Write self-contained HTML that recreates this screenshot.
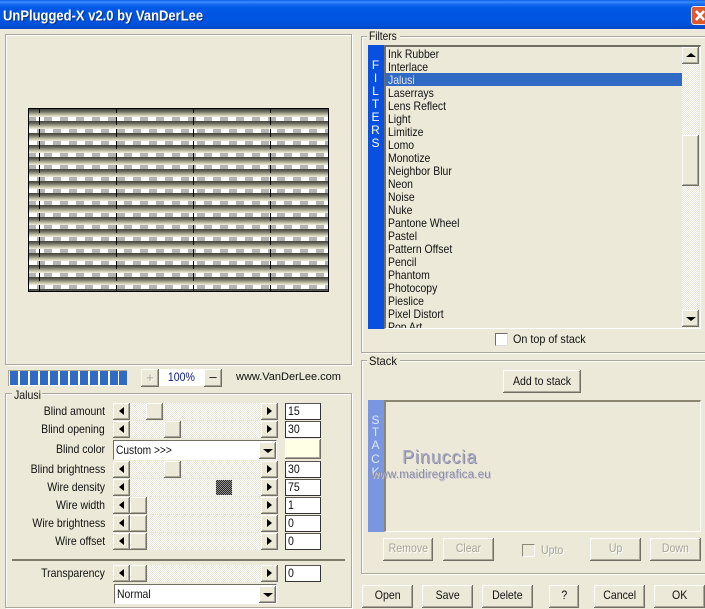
<!DOCTYPE html>
<html><head><meta charset="utf-8">
<style>
html,body{margin:0;padding:0;background:#ece9d8}
body{width:705px;height:609px;position:relative;overflow:hidden;font:12px/13px "Liberation Sans",sans-serif;color:#111}
div,span{position:absolute;box-sizing:border-box;white-space:nowrap}
i{font-style:normal;display:inline-block;transform:scaleX(.88)}
i.l{transform-origin:left center}
.title{left:0;top:0;width:705px;height:29px;background:linear-gradient(#0a5fe8 0,#3c8eff 2px,#1a6cf0 4px,#0058e4 8px,#0054e0 22px,#0049c8 29px)}
.g{border:1px solid #aca899;box-shadow:1px 1px 0 #fff,inset 1px 1px 0 #fff}
.lg{background:#ece9d8;padding:0 2px;height:13px}
.b{background:#ece9d8;box-shadow:inset -1px -1px 0 #716f64,inset 1px 1px 0 #fff,inset -2px -2px 0 #aca899;text-align:center}
.t{background:repeating-conic-gradient(#fff 0 25%,#e8e5d4 0 50%) 0 0/2px 2px}
.a{width:0;height:0}
.L{border:4px solid transparent;border-left:0;border-right:5px solid #000}
.R{border:4px solid transparent;border-right:0;border-left:5px solid #000}
.U{border:5px solid transparent;border-top:0;border-bottom:4px solid #000}
.D{border:5px solid transparent;border-bottom:0;border-top:4px solid #000}
.lab{right:600px;text-align:right;font-size:12px;transform:scaleX(.875);transform-origin:right center}
.inp{background:#fff;border:1px solid #333;border-top-color:#555;left:285px;width:36px;height:17px;padding:1px 0 0 2px;font-size:12px}
.it{left:388px;font-size:12px;line-height:13px;transform:scaleX(.87);transform-origin:left center}
.dis{color:#a5a294;text-shadow:1px 1px 0 #fff}
.v{color:#fff;width:15px;text-align:center;font-size:12px}
.bl{top:371px;width:8px;height:14px;background:#316ac5}
</style></head><body>

<div class="title"></div>
<div style="left:3px;top:7px;color:#fff;font:bold 13px/16px 'Liberation Sans',sans-serif;transform:scaleY(1.12);transform-origin:left top;text-shadow:1px 1px 0 #0a2f8a">UnPlugged-X v2.0 by VanDerLee</div>
<div style="left:691px;top:6px;width:20px;height:19px;background:#dd5a30;border:1px solid #f0e8e0;border-radius:3px"></div>
<svg style="position:absolute;left:691px;top:6px" width="14" height="19"><path d="M5 5L13 14M13 5L5 14" stroke="#fff" stroke-width="2.6" fill="none"/></svg>

<!-- preview -->
<div class="g" style="left:5px;top:34px;width:347px;height:331px"></div>
<svg style="position:absolute;left:28px;top:108px" width="301" height="184" shape-rendering="crispEdges">
<defs>
<pattern id="band" width="16" height="12" patternUnits="userSpaceOnUse" x="0" y="1">
<rect width="16" height="1" y="0" fill="#4a4a40"/><rect width="16" height="1" y="1" fill="#5a5a4e"/><rect width="16" height="1" y="2" fill="#6e6e60"/><rect width="16" height="1" y="3" fill="#868674"/><rect width="16" height="1" y="4" fill="#a0a08c"/><rect width="16" height="1" y="5" fill="#babaa2"/><rect width="16" height="1" y="6" fill="#d2d2b8"/><rect width="16" height="1" y="7" fill="#e6e6cf"/>
<rect width="16" height="4" y="8" fill="#fff"/>
</pattern>
<pattern id="p0" width="16" height="4" patternUnits="userSpaceOnUse" x="0" y="0"><rect width="16" height="4" fill="#fff"/><rect width="8" height="4" fill="#b4b4b4"/></pattern>
<pattern id="p1" width="16" height="4" patternUnits="userSpaceOnUse" x="9" y="0"><rect width="16" height="4" fill="#fff"/><rect width="8" height="4" fill="#b4b4b4"/></pattern>
</defs>
<rect x="1" y="1" width="299" height="182" fill="url(#band)"/>
<g transform="translate(0,9)"><rect x="1" width="299" height="4" fill="url(#p0)"/></g>
<g transform="translate(0,21)"><rect x="1" width="299" height="4" fill="url(#p1)"/></g>
<g transform="translate(0,33)"><rect x="1" width="299" height="4" fill="url(#p1)"/></g>
<g transform="translate(0,45)"><rect x="1" width="299" height="4" fill="url(#p0)"/></g>
<g transform="translate(0,57)"><rect x="1" width="299" height="4" fill="url(#p0)"/></g>
<g transform="translate(0,69)"><rect x="1" width="299" height="4" fill="url(#p1)"/></g>
<g transform="translate(0,81)"><rect x="1" width="299" height="4" fill="url(#p1)"/></g>
<g transform="translate(0,93)"><rect x="1" width="299" height="4" fill="url(#p0)"/></g>
<g transform="translate(0,105)"><rect x="1" width="299" height="4" fill="url(#p1)"/></g>
<g transform="translate(0,117)"><rect x="1" width="299" height="4" fill="url(#p0)"/></g>
<g transform="translate(0,129)"><rect x="1" width="299" height="4" fill="url(#p1)"/></g>
<g transform="translate(0,141)"><rect x="1" width="299" height="4" fill="url(#p0)"/></g>
<g transform="translate(0,153)"><rect x="1" width="299" height="4" fill="url(#p1)"/></g>
<g transform="translate(0,165)"><rect x="1" width="299" height="4" fill="url(#p0)"/></g>
<g transform="translate(0,177)"><rect x="1" width="299" height="4" fill="url(#p1)"/></g>
<g stroke="#000" stroke-width="1" stroke-dasharray="8 4" stroke-dashoffset="-9"><path d="M11.5 0V184M88.5 0V184M165.5 0V184M242.5 0V184"/></g>
<rect x=".5" y=".5" width="300" height="183" fill="none" stroke="#000"/>
</svg>

<!-- progress and zoom -->
<div style="left:8px;top:370px;width:119px;height:16px;background:#fff;border-top:1px solid #aca899;border-left:1px solid #aca899"></div>
<div class="bl" style="left:10px"></div><div class="bl" style="left:20px"></div><div class="bl" style="left:30px"></div><div class="bl" style="left:40px"></div><div class="bl" style="left:50px"></div><div class="bl" style="left:60px"></div><div class="bl" style="left:70px"></div><div class="bl" style="left:80px"></div><div class="bl" style="left:90px"></div><div class="bl" style="left:100px"></div><div class="bl" style="left:110px"></div><div class="bl" style="left:119px"></div>
<div style="left:159px;top:369px;width:45px;height:17px;background:#fff;color:#0a1a80;text-align:center;font-size:12px;line-height:17px"><i>100%</i></div>
<div class="b dis" style="left:141px;top:369px;width:18px;height:18px;line-height:17px;font-size:13px">+</div>
<div class="b" style="left:204px;top:369px;width:18px;height:18px;line-height:16px;font-size:13px">–</div>
<div style="left:236px;top:371px;font-size:11px">www.VanDerLee.com</div>

<!-- Jalusi -->
<div class="g" style="left:5px;top:393px;width:347px;height:215px"></div>
<div class="lg" style="left:12px;top:389px;width:30px"><i class="l">Jalusi</i></div>

<div class="lab" style="top:405px">Blind amount</div>
<div class="lab" style="top:423px">Blind opening</div>
<div class="lab" style="top:443px">Blind color</div>
<div class="lab" style="top:463px">Blind brightness</div>
<div class="lab" style="top:481px">Wire density</div>
<div class="lab" style="top:499px">Wire width</div>
<div class="lab" style="top:517px">Wire brightness</div>
<div class="lab" style="top:535px">Wire offset</div>
<div class="lab" style="top:567px">Transparency</div>

<div class="t" style="left:113px;top:403px;width:165px;height:17px"></div>
<div class="t" style="left:113px;top:421px;width:165px;height:17px"></div>
<div class="t" style="left:113px;top:461px;width:165px;height:17px"></div>
<div class="t" style="left:113px;top:479px;width:165px;height:17px"></div>
<div class="t" style="left:113px;top:497px;width:165px;height:17px"></div>
<div class="t" style="left:113px;top:515px;width:165px;height:17px"></div>
<div class="t" style="left:113px;top:533px;width:165px;height:17px"></div>
<div class="t" style="left:113px;top:565px;width:165px;height:17px"></div>

<div class="b" style="left:113px;top:403px;width:17px;height:17px"><div class="a L" style="left:6px;top:4px"></div></div>
<div class="b" style="left:113px;top:421px;width:17px;height:17px"><div class="a L" style="left:6px;top:4px"></div></div>
<div class="b" style="left:113px;top:461px;width:17px;height:17px"><div class="a L" style="left:6px;top:4px"></div></div>
<div class="b" style="left:113px;top:479px;width:17px;height:17px"><div class="a L" style="left:6px;top:4px"></div></div>
<div class="b" style="left:113px;top:497px;width:17px;height:17px"><div class="a L" style="left:6px;top:4px"></div></div>
<div class="b" style="left:113px;top:515px;width:17px;height:17px"><div class="a L" style="left:6px;top:4px"></div></div>
<div class="b" style="left:113px;top:533px;width:17px;height:17px"><div class="a L" style="left:6px;top:4px"></div></div>
<div class="b" style="left:113px;top:565px;width:17px;height:17px"><div class="a L" style="left:6px;top:4px"></div></div>

<div class="b" style="left:261px;top:403px;width:17px;height:17px"><div class="a R" style="left:6px;top:4px"></div></div>
<div class="b" style="left:261px;top:421px;width:17px;height:17px"><div class="a R" style="left:6px;top:4px"></div></div>
<div class="b" style="left:261px;top:461px;width:17px;height:17px"><div class="a R" style="left:6px;top:4px"></div></div>
<div class="b" style="left:261px;top:479px;width:17px;height:17px"><div class="a R" style="left:6px;top:4px"></div></div>
<div class="b" style="left:261px;top:497px;width:17px;height:17px"><div class="a R" style="left:6px;top:4px"></div></div>
<div class="b" style="left:261px;top:515px;width:17px;height:17px"><div class="a R" style="left:6px;top:4px"></div></div>
<div class="b" style="left:261px;top:533px;width:17px;height:17px"><div class="a R" style="left:6px;top:4px"></div></div>
<div class="b" style="left:261px;top:565px;width:17px;height:17px"><div class="a R" style="left:6px;top:4px"></div></div>

<div class="b" style="left:146px;top:403px;width:17px;height:17px"></div>
<div class="b" style="left:164px;top:421px;width:17px;height:17px"></div>
<div class="b" style="left:164px;top:461px;width:17px;height:17px"></div>
<div style="left:216px;top:480px;width:16px;height:15px;background:repeating-conic-gradient(#222 0 25%,#999 0 50%) 0 0/2px 2px"></div>
<div class="b" style="left:130px;top:497px;width:17px;height:17px"></div>
<div class="b" style="left:130px;top:515px;width:17px;height:17px"></div>
<div class="b" style="left:130px;top:533px;width:17px;height:17px"></div>
<div class="b" style="left:130px;top:565px;width:17px;height:17px"></div>

<div class="inp" style="top:403px"><i class="l">15</i></div>
<div class="inp" style="top:421px"><i class="l">30</i></div>
<div class="inp" style="top:461px"><i class="l">30</i></div>
<div class="inp" style="top:479px"><i class="l">75</i></div>
<div class="inp" style="top:497px"><i class="l">1</i></div>
<div class="inp" style="top:515px"><i class="l">0</i></div>
<div class="inp" style="top:533px"><i class="l">0</i></div>
<div class="inp" style="top:565px"><i class="l">0</i></div>

<div style="left:113px;top:440px;width:164px;height:20px;background:#fff;border:1px solid #716f64;border-right-color:#fff;border-bottom-color:#fff;padding:3px 0 0 2px"><i class="l" style="transform:scaleX(.85)">Custom &gt;&gt;&gt;</i></div>
<div class="b" style="left:259px;top:442px;width:17px;height:17px"><div class="a D" style="left:4px;top:7px"></div></div>
<div class="b" style="left:285px;top:439px;width:36px;height:20px;background:#ffffe6"></div>

<div style="left:12px;top:559px;width:333px;height:2px;background:#7f7b6a"></div>

<div style="left:114px;top:584px;width:163px;height:20px;background:#fff;border:1px solid #716f64;border-right-color:#fff;border-bottom-color:#fff;padding:3px 0 0 2px"><i class="l" style="transform:scaleX(.87)">Normal</i></div>
<div class="b" style="left:259px;top:586px;width:17px;height:17px"><div class="a D" style="left:4px;top:7px"></div></div>

<!-- Filters -->
<div class="g" style="left:361px;top:36px;width:350px;height:317px"></div>
<div class="lg" style="left:367px;top:30px;width:33px"><i class="l" style="transform:scaleX(.85)">Filters</i></div>
<div style="left:368px;top:45px;width:16px;height:284px;background:#0a50e0"></div>
<div style="left:384px;top:45px;width:317px;height:284px;background:#ece9d8;border-top:2px solid #716f64;border-left:2px solid #716f64;border-right:1px solid #fff;border-bottom:1px solid #fff;overflow:hidden"></div>
<div class="v" style="left:368px;top:59px">F</div><div class="v" style="left:368px;top:72px">I</div><div class="v" style="left:368px;top:85px">L</div><div class="v" style="left:368px;top:98px">T</div><div class="v" style="left:368px;top:111px">E</div><div class="v" style="left:368px;top:124px">R</div><div class="v" style="left:368px;top:137px">S</div>
<div style="left:385px;top:73px;width:297px;height:13px;background:#316ac5"></div>
<div style="left:386px;top:47px;width:296px;height:281px;overflow:hidden">
<div class="it" style="left:2px;top:1px">Ink Rubber</div>
<div class="it" style="left:2px;top:14px">Interlace</div>
<div class="it" style="left:2px;top:27px;color:#e8e8f0">Jalusi</div>
<div class="it" style="left:2px;top:40px">Laserrays</div>
<div class="it" style="left:2px;top:53px">Lens Reflect</div>
<div class="it" style="left:2px;top:66px">Light</div>
<div class="it" style="left:2px;top:79px">Limitize</div>
<div class="it" style="left:2px;top:92px">Lomo</div>
<div class="it" style="left:2px;top:105px">Monotize</div>
<div class="it" style="left:2px;top:118px">Neighbor Blur</div>
<div class="it" style="left:2px;top:131px">Neon</div>
<div class="it" style="left:2px;top:144px">Noise</div>
<div class="it" style="left:2px;top:157px">Nuke</div>
<div class="it" style="left:2px;top:170px">Pantone Wheel</div>
<div class="it" style="left:2px;top:183px">Pastel</div>
<div class="it" style="left:2px;top:196px">Pattern Offset</div>
<div class="it" style="left:2px;top:209px">Pencil</div>
<div class="it" style="left:2px;top:222px">Phantom</div>
<div class="it" style="left:2px;top:235px">Photocopy</div>
<div class="it" style="left:2px;top:248px">Pieslice</div>
<div class="it" style="left:2px;top:261px">Pixel Distort</div>
<div class="it" style="left:2px;top:274px">Pop Art</div>
</div>
<div class="t" style="left:682px;top:47px;width:17px;height:281px"></div>
<div class="b" style="left:682px;top:47px;width:17px;height:17px"><div class="a U" style="left:4px;top:6px"></div></div>
<div class="b" style="left:682px;top:135px;width:17px;height:51px"></div>
<div class="b" style="left:682px;top:310px;width:17px;height:17px"><div class="a D" style="left:4px;top:7px"></div></div>
<div style="left:495px;top:333px;width:13px;height:13px;background:#fff;border:1px solid #716f64;border-right-color:#ddd;border-bottom-color:#ddd"></div>
<div style="left:513px;top:333px"><i class="l" style="transform:scaleX(.9)">On top of stack</i></div>

<!-- Stack -->
<div class="g" style="left:361px;top:360px;width:350px;height:214px"></div>
<div class="lg" style="left:367px;top:355px;width:33px"><i class="l" style="transform:scaleX(.93)">Stack</i></div>
<div class="b" style="left:503px;top:370px;width:78px;height:23px;line-height:22px"><i>Add to stack</i></div>
<div style="left:368px;top:400px;width:16px;height:132px;background:#7b96e0"></div>
<div style="left:384px;top:400px;width:317px;height:132px;border-top:2px solid #8a8672;border-left:2px solid #8a8672;border-right:1px solid #fff;border-bottom:1px solid #fff"></div>
<div class="v" style="left:368px;top:414px;color:#dfe6fa">S</div><div class="v" style="left:368px;top:426px;color:#dfe6fa">T</div><div class="v" style="left:368px;top:439px;color:#dfe6fa">A</div><div class="v" style="left:368px;top:453px;color:#dfe6fa">C</div><div class="v" style="left:368px;top:466px;color:#dfe6fa">K</div>
<div style="left:402px;top:447px;font:18px/21px 'Liberation Sans',sans-serif;letter-spacing:.9px;color:#a9a9c2;text-shadow:1px 1px 0 #8a8aa0">Pinuccia</div>
<div style="left:371px;top:469px;font:11.5px/13px 'Liberation Sans',sans-serif;letter-spacing:.2px;color:#8c8ca4;text-shadow:1px 1px 0 #c8c8d0">www.maidiregrafica.eu</div>

<div class="b dis" style="left:383px;top:538px;width:50px;height:23px;line-height:21px"><i>Remove</i></div>
<div class="b dis" style="left:443px;top:538px;width:51px;height:23px;line-height:21px"><i>Clear</i></div>
<div style="left:522px;top:544px;width:13px;height:13px;border:1px solid #8a8672;border-right-color:#fff;border-bottom-color:#fff"></div>
<div class="dis" style="left:541px;top:544px"><i class="l">Upto</i></div>
<div class="b dis" style="left:590px;top:538px;width:51px;height:23px;line-height:21px"><i>Up</i></div>
<div class="b dis" style="left:650px;top:538px;width:51px;height:23px;line-height:21px"><i>Down</i></div>

<div class="b" style="left:362px;top:585px;width:51px;height:23px;line-height:21px"><i>Open</i></div>
<div class="b" style="left:422px;top:585px;width:51px;height:23px;line-height:21px"><i>Save</i></div>
<div class="b" style="left:482px;top:585px;width:51px;height:23px;line-height:21px"><i>Delete</i></div>
<div class="b" style="left:549px;top:585px;width:30px;height:23px;line-height:21px"><i>?</i></div>
<div class="b" style="left:594px;top:585px;width:51px;height:23px;line-height:21px"><i>Cancel</i></div>
<div class="b" style="left:654px;top:585px;width:51px;height:23px;line-height:21px"><i>OK</i></div>

</body></html>
